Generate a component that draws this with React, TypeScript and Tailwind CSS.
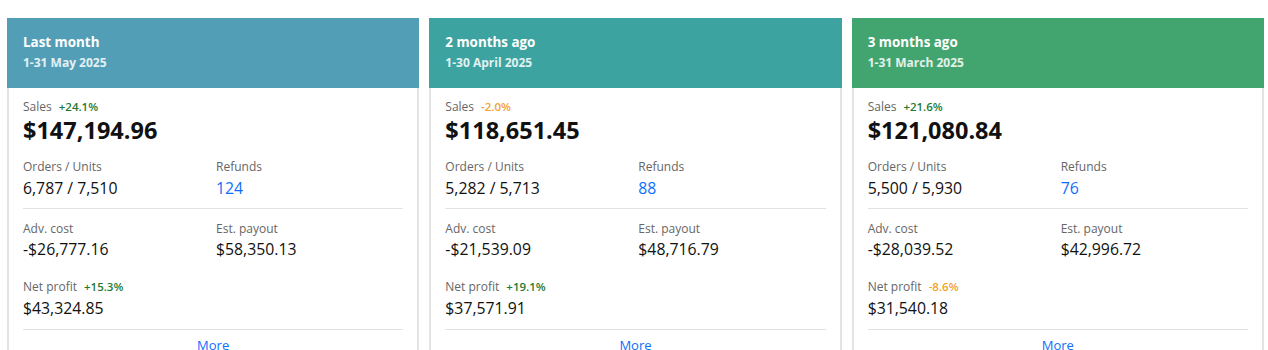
import React from "react";

type Pct = { v: string; up: boolean };
type Card = {
  title: string;
  date: string;
  color: string;
  sales: string;
  salesPct: Pct;
  orders: string;
  refunds: string;
  adv: string;
  payout: string;
  net: string;
  netPct: Pct;
};

const cards: Card[] = [
  {
    title: "Last month",
    date: "1-31 May 2025",
    color: "bg-[#529eb6]",
    sales: "$147,194.96",
    salesPct: { v: "+24.1%", up: true },
    orders: "6,787 / 7,510",
    refunds: "124",
    adv: "-$26,777.16",
    payout: "$58,350.13",
    net: "$43,324.85",
    netPct: { v: "+15.3%", up: true },
  },
  {
    title: "2 months ago",
    date: "1-30 April 2025",
    color: "bg-[#3ca3a0]",
    sales: "$118,651.45",
    salesPct: { v: "-2.0%", up: false },
    orders: "5,282 / 5,713",
    refunds: "88",
    adv: "-$21,539.09",
    payout: "$48,716.79",
    net: "$37,571.91",
    netPct: { v: "+19.1%", up: true },
  },
  {
    title: "3 months ago",
    date: "1-31 March 2025",
    color: "bg-[#42a46e]",
    sales: "$121,080.84",
    salesPct: { v: "+21.6%", up: true },
    orders: "5,500 / 5,930",
    refunds: "76",
    adv: "-$28,039.52",
    payout: "$42,996.72",
    net: "$31,540.18",
    netPct: { v: "-8.6%", up: false },
  },
];

function PctBadge({ p }: { p: Pct }) {
  return (
    <span
      className={
        "ml-[7px] text-[11.5px] font-semibold " +
        (p.up ? "text-[#1f7a35]" : "text-[#f5a02a]")
      }
    >
      {p.v}
    </span>
  );
}

function Label({ children }: { children: React.ReactNode }) {
  return <div className="text-[12px] leading-[16px] text-[#666666]">{children}</div>;
}

function Value({ children, blue }: { children: React.ReactNode; blue?: boolean }) {
  return (
    <div
      className={
        "mt-[2px] text-[15.8px] leading-[22px] " + (blue ? "text-[#0d6efd]" : "text-[#111111]")
      }
    >
      {children}
    </div>
  );
}

function CardView({ c }: { c: Card }) {
  return (
    <div className="flex flex-col">
      <div className={"h-[70px] px-4 pt-[15px] text-white " + c.color}>
        <div className="text-[13.4px] font-bold leading-[18px]">{c.title}</div>
        <div className="mt-[4px] text-[12px] font-bold leading-[16px] text-white/85">
          {c.date}
        </div>
      </div>
      <div className="flex-1 border-x-2 border-[#e4e4e4] px-[14px] pt-[11px]">
        <div className="flex items-baseline text-[12px] leading-[16px] text-[#666666]">
          <span>Sales</span>
          <PctBadge p={c.salesPct} />
        </div>
        <div className="text-[23.5px] font-bold leading-[30px] text-[#111111]">{c.sales}</div>

        <div className="mt-[14px] grid grid-cols-[193px_1fr]">
          <div>
            <Label>Orders / Units</Label>
            <Value>{c.orders}</Value>
          </div>
          <div>
            <Label>Refunds</Label>
            <Value blue>{c.refunds}</Value>
          </div>
        </div>

        <div className="mt-[9px] h-px bg-[#e2e2e2]" />

        <div className="mt-[12px] grid grid-cols-[193px_1fr]">
          <div>
            <Label>Adv. cost</Label>
            <div className="mt-[1px] text-[15.8px] leading-[22px] text-[#111111]">{c.adv}</div>
          </div>
          <div>
            <Label>Est. payout</Label>
            <div className="mt-[1px] text-[15.8px] leading-[22px] text-[#111111]">{c.payout}</div>
          </div>
        </div>

        <div className="mt-[19px] flex items-baseline text-[12px] leading-[16px] text-[#666666]">
          <span>Net profit</span>
          <PctBadge p={c.netPct} />
        </div>
        <Value>{c.net}</Value>

        <div className="mt-[10px] h-px bg-[#e2e2e2]" />

        <div className="mt-[5px] text-center text-[13px] leading-[20px] text-[#0d6efd]">
          More
        </div>
        <div className="h-[20px]" />
      </div>
    </div>
  );
}

export default function App() {
  return (
    <div
      className="h-[350px] w-[1268px] overflow-hidden bg-white pt-[18px] pl-[7px] pr-[4px]"
      style={{ fontFamily: '"Open Sans", "Noto Sans", sans-serif' }}
    >
      <div className="grid grid-cols-3 gap-[10px]">
        {cards.map((c) => (
          <CardView key={c.title} c={c} />
        ))}
      </div>
    </div>
  );
}
